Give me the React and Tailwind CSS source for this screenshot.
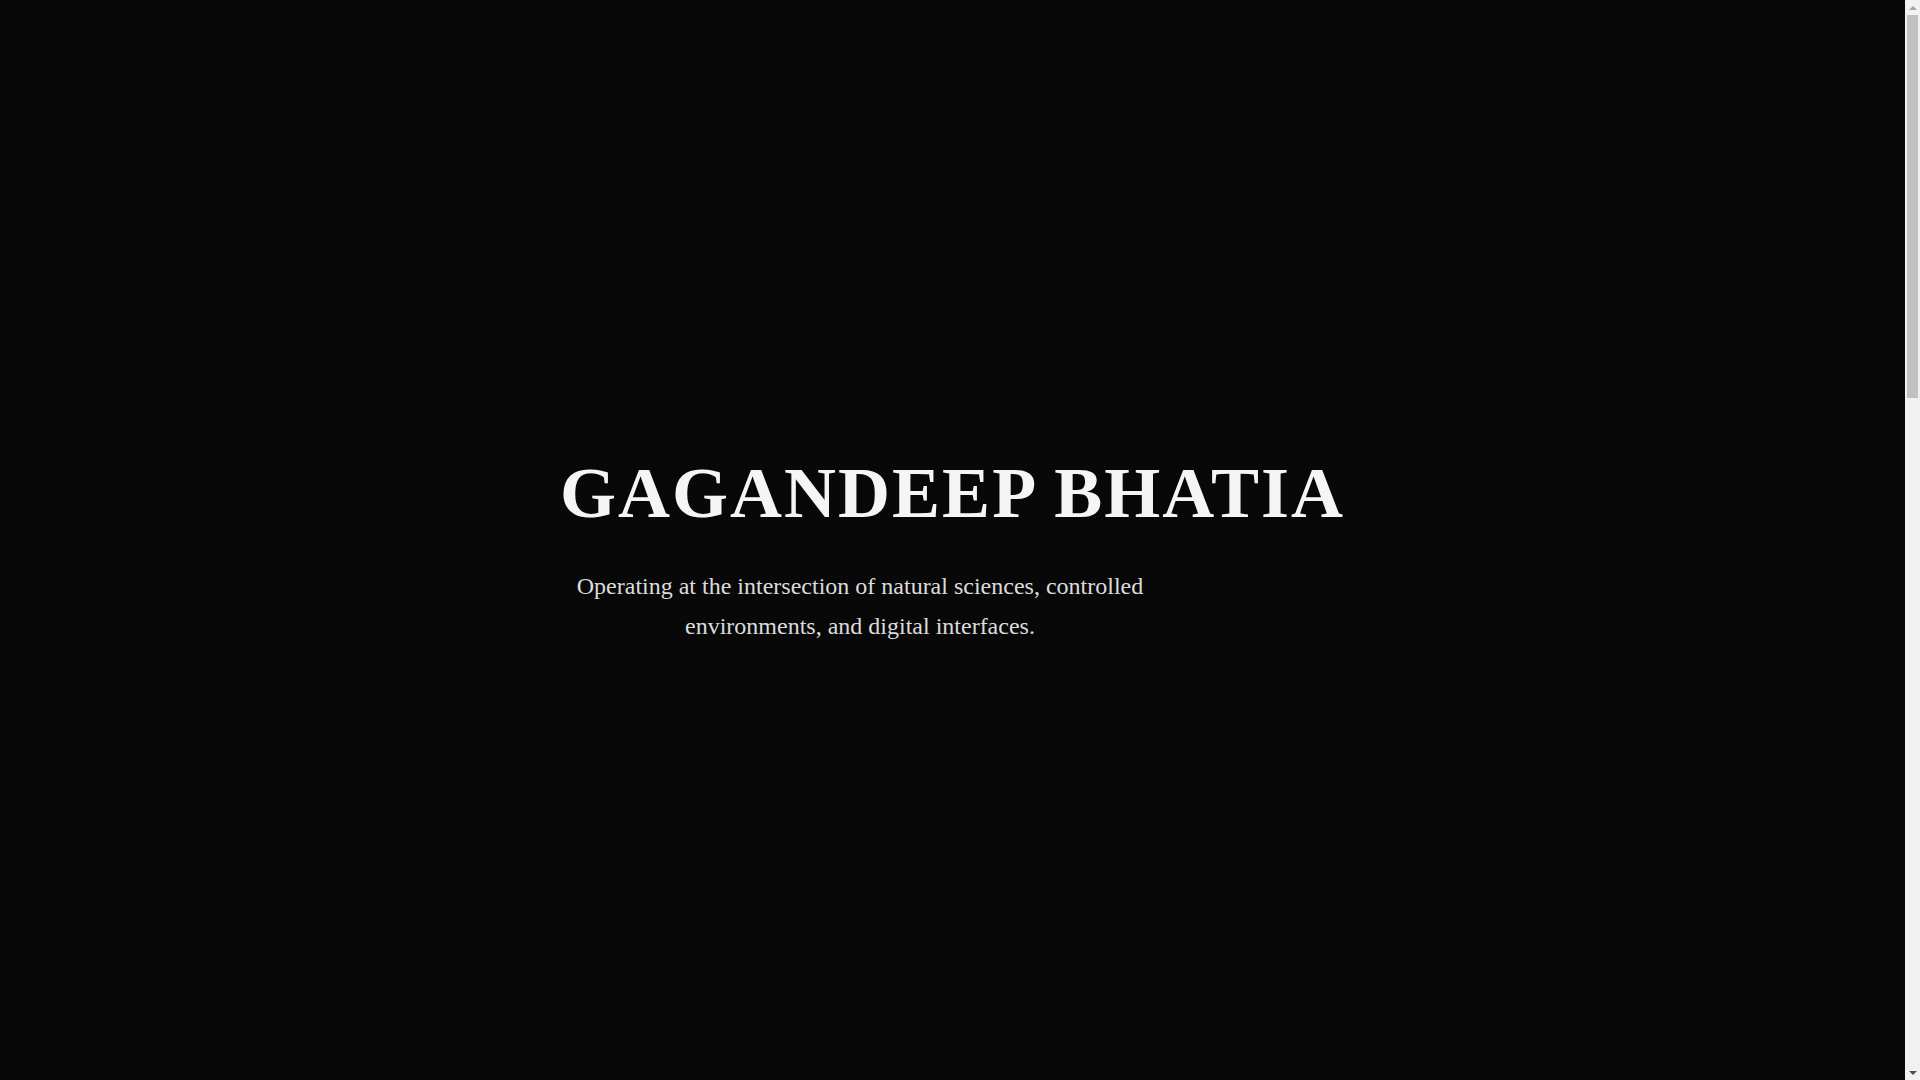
export default function App() {
  return (
    <div className="flex h-screen overflow-hidden bg-[#080808] font-['Liberation_Serif','Times_New_Roman',serif]">
      {/* Hero */}
      <main className="flex-1 flex justify-center pt-[457px]">
        <div>
          <h1 className="text-[72px] leading-none font-bold tracking-[0.028em] text-[#f5f5f5]">
            GAGANDEEP BHATIA
          </h1>
          <p className="mt-[37px] max-w-[600px] text-center text-[24px] leading-[40px] text-[#dcdcdc]">
            Operating at the intersection of natural sciences, controlled environments, and digital interfaces.
          </p>
        </div>
      </main>

      {/* browser scrollbar */}
      <aside className="w-[15px] shrink-0 bg-[#f1f1f1] flex flex-col">
        <div className="h-[15px] flex items-center justify-center">
          <div className="w-0 h-0 border-l-[4px] border-r-[4px] border-b-[4px] border-l-transparent border-r-transparent border-b-[#a3a3a3]" />
        </div>
        <div className="mx-[2px] h-[383px] bg-[#c1c1c1]" />
        <div className="flex-1" />
        <div className="h-[15px] flex items-center justify-center">
          <div className="w-0 h-0 border-l-[4px] border-r-[4px] border-t-[4px] border-l-transparent border-r-transparent border-t-[#505050]" />
        </div>
      </aside>
    </div>
  )
}
